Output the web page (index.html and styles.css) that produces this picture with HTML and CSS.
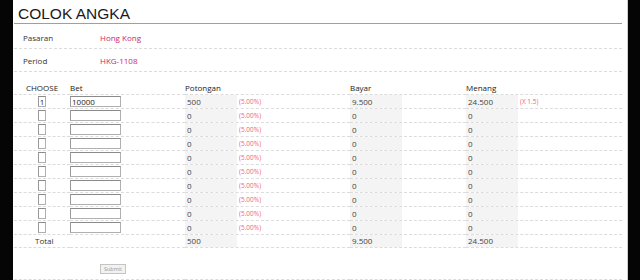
FILE: index.html
```html
<!DOCTYPE html>
<html lang="id">

<head>
    <meta charset="UTF-8">
    <title>Colok Angka</title>
    <link rel="stylesheet" href="styles.css">
</head>

<body>
    <div class="page">
        <div class="content">
            <h1 class="title">COLOK ANGKA</h1>

            <div class="info">
                <div class="info-row">
                    <span class="info-label">Pasaran</span>
                    <span class="info-value">Hong Kong</span>
                </div>
                <div class="info-row">
                    <span class="info-label">Period</span>
                    <span class="info-value">HKG-1108</span>
                </div>
            </div>

            <table class="bets">
                <colgroup>
                    <col class="c-choose">
                    <col class="c-bet">
                    <col class="c-pot">
                    <col class="c-bayar">
                    <col class="c-menang">
                </colgroup>
                <thead>
                    <tr>
                        <th class="center">CHOOSE</th>
                        <th>Bet</th>
                        <th>Potongan</th>
                        <th>Bayar</th>
                        <th>Menang</th>
                    </tr>
                </thead>
                <tbody id="bet-rows">
                </tbody>
                <tfoot>
                    <tr class="total-row">
                        <td colspan="2" class="total-label">Total</td>
                        <td><span class="box">500</span></td>
                        <td><span class="box">9.500</span></td>
                        <td><span class="box">24.500</span></td>
                    </tr>
                    <tr class="submit-row">
                        <td colspan="5"><button class="submit">Submit</button></td>
                    </tr>
                </tfoot>
            </table>
        </div>
    </div>

    <script>
        const rows = [
            { num: '1', bet: '10000', pot: '500', bayar: '9.500', menang: '24.500' }
        ];
        for (let i = 1; i < 10; i++) {
            rows.push({ num: '', bet: '', pot: '0', bayar: '0', menang: '0' });
        }

        const body = document.getElementById('bet-rows');
        rows.forEach((r, index) => {
            const tr = document.createElement('tr');
            const mult = index === 0 ? '<span class="note">(X 1.5)</span>' : '';
            tr.innerHTML = `
                <td class="center"><input class="num" type="text" value="${r.num}"></td>
                <td><input class="bet" type="text" value="${r.bet}"></td>
                <td><span class="box">${r.pot}</span><span class="note">(5.00%)</span></td>
                <td><span class="box">${r.bayar}</span></td>
                <td><span class="box">${r.menang}</span>${mult}</td>
            `;
            body.appendChild(tr);
        });
    </script>
</body>

</html>
```

FILE: styles.css
```css
body {
    margin: 0;
    background-color: #050505;
    font-family: "Open Sans", Arial, sans-serif;
    font-size: 8px;
    color: #333;
}

.page {
    margin-left: 13px;
    width: 614px;
    height: 280px;
    background-color: #fff;
    border-right: 1px solid #cfcfcf;
    overflow: hidden;
}

.content {
    margin-left: 1px;
    width: 608px;
}

.title {
    margin: 0;
    padding: 4px 0 0 4px;
    height: 19px;
    font-family: "Liberation Sans", Arial, sans-serif;
    font-size: 15.5px;
    font-weight: normal;
    line-height: 19px;
    color: #1a1a1a;
    border-bottom: 1px solid #62b0ea;
}

.info {
    padding-top: 2px;
}

.info-row {
    display: flex;
    align-items: center;
    height: 22px;
    border-bottom: 1px dashed #dcdcdc;
}

.info-label {
    width: 77px;
    padding-left: 9px;
}

.info-value {
    color: #c8296c;
}

.bets {
    width: 608px;
    margin-top: 10px;
    border-collapse: collapse;
    table-layout: fixed;
}

.c-choose {
    width: 56px;
}

.c-bet {
    width: 115px;
}

.c-pot {
    width: 165px;
}

.c-bayar {
    width: 116px;
}

.c-menang {
    width: 156px;
}

th,
td {
    padding: 0;
    text-align: left;
    white-space: nowrap;
    border-bottom: 1px dashed #dcdcdc;
    line-height: 13px;
    overflow: hidden;
}

th {
    height: 12px;
    line-height: 12px;
    font-weight: normal;
    color: #222;
    vertical-align: bottom;
}

td {
    height: 13px;
    vertical-align: top;
}

.center {
    text-align: center;
}

.num,
.bet {
    box-sizing: border-box;
    height: 11px;
    margin: 1px 0 0 0;
    padding: 0 0 0 1px;
    border: 1px solid #b0b0b0;
    border-top-color: #8a8a8a;
    border-left-color: #999;
    font-family: "Open Sans", Arial, sans-serif;
    font-size: 8px;
    line-height: 9px;
    color: #222;
    vertical-align: top;
}

.num {
    width: 8px;
    padding: 0;
    text-align: center;
}

.bet {
    width: 51px;
}

.box {
    display: inline-block;
    width: 50px;
    height: 13px;
    padding-left: 2px;
    background-color: #f4f4f4;
    color: #444;
    vertical-align: top;
}

.note {
    display: inline-block;
    height: 13px;
    margin-left: 2px;
    font-size: 6.5px;
    color: #f06478;
    vertical-align: top;
}

.total-row td {
    height: 12px;
    line-height: 12px;
}

.total-row .box {
    height: 12px;
}

.total-label {
    padding-left: 21px;
    color: #333;
}

.submit-row td {
    height: 31px;
    padding-left: 86px;
}

.submit {
    box-sizing: border-box;
    width: 26px;
    height: 10px;
    margin-top: 16px;
    padding: 0;
    border: 1px solid #c4c4c4;
    background-color: #f2f2f2;
    font-family: "Open Sans", Arial, sans-serif;
    font-size: 5.5px;
    line-height: 8px;
    color: #999;
    vertical-align: top;
}
```
